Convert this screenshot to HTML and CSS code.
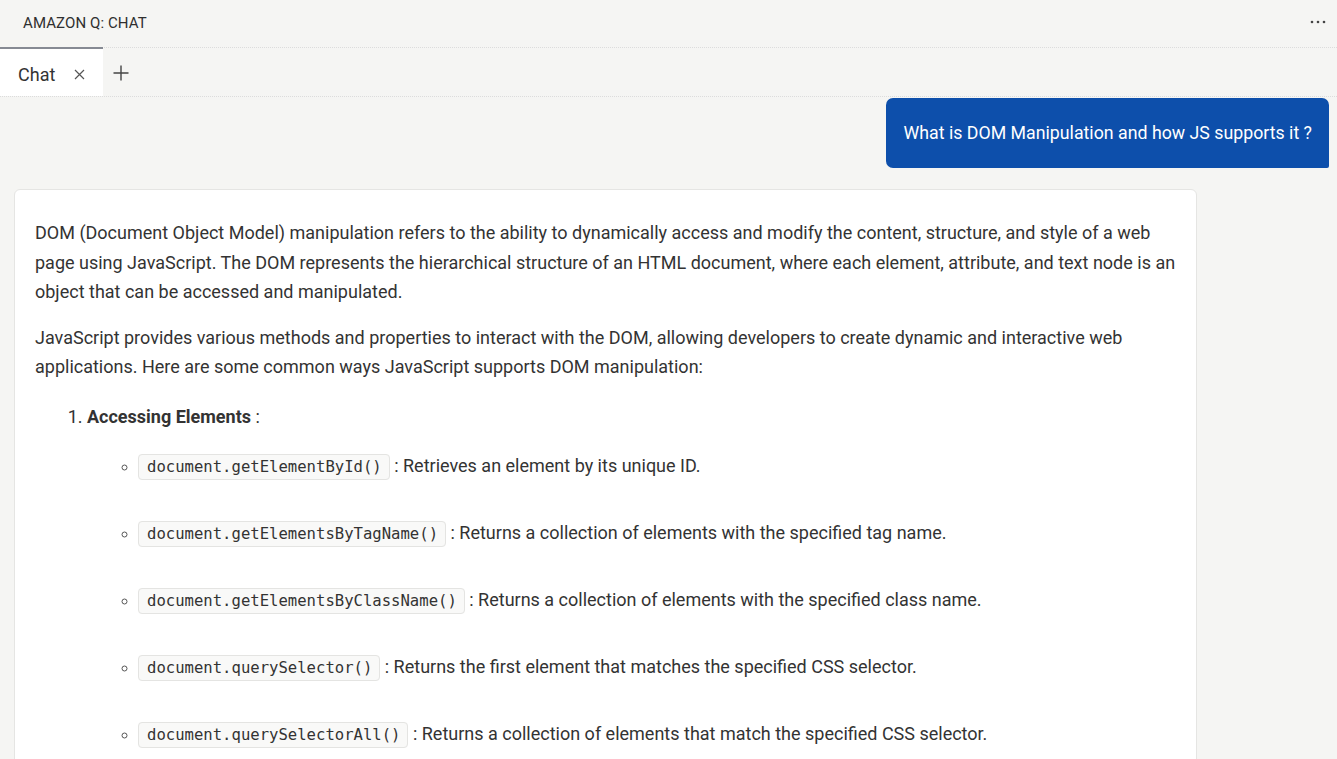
FILE: index.html
```html
<!DOCTYPE html>
<html>
<head>
<meta charset="utf-8">
<link rel="stylesheet" href="styles.css">
</head>
<body>
<div class="app">
  <header class="titlebar">
    <span class="title">AMAZON Q: CHAT</span>
    <svg class="more" width="16" height="4" viewBox="0 0 16 4"><circle cx="2" cy="2" r="1.3" fill="#444"/><circle cx="8" cy="2" r="1.3" fill="#444"/><circle cx="14" cy="2" r="1.3" fill="#444"/></svg>
  </header>
  <nav class="tabbar">
    <div class="tab active">
      <span class="tab-label">Chat</span>
      <svg class="tab-close" width="11" height="11" viewBox="0 0 11 11"><path d="M1 1L10 10M10 1L1 10" stroke="#555" stroke-width="1.2" fill="none"/></svg>
    </div>
    <div class="tab-add">
      <svg width="16" height="16" viewBox="0 0 16 16"><path d="M8 0.5V15.5M0.5 8H15.5" stroke="#444" stroke-width="1.4" fill="none"/></svg>
    </div>
  </nav>
  <main class="chat">
    <div class="row-user">
      <div class="bubble">What is DOM Manipulation and how JS supports it ?</div>
    </div>
    <div class="card">
      <p>DOM (Document Object Model) manipulation refers to the ability to dynamically access and modify the content, structure, and style of a web page using JavaScript. The DOM represents the hierarchical structure of an HTML document, where each element, attribute, and text node is an object that can be accessed and manipulated.</p>
      <p>JavaScript provides various methods and properties to interact with the DOM, allowing developers to create dynamic and interactive web applications. Here are some common ways JavaScript supports DOM manipulation:</p>
      <ol class="steps">
        <li><strong>Accessing Elements</strong> :
          <ul class="sub">
            <li><code>document.getElementById()</code> : Retrieves an element by its unique ID.</li>
            <li><code>document.getElementsByTagName()</code> : Returns a collection of elements with the specified tag name.</li>
            <li><code>document.getElementsByClassName()</code> : Returns a collection of elements with the specified class name.</li>
            <li><code>document.querySelector()</code> : Returns the first element that matches the specified CSS selector.</li>
            <li><code>document.querySelectorAll()</code> : Returns a collection of elements that match the specified CSS selector.</li>
          </ul>
        </li>
      </ol>
    </div>
  </main>
</div>
</body>
</html>
```
FILE: styles.css
```css
* { box-sizing: border-box; }
html, body {
  margin: 0;
  padding: 0;
  height: 100%;
  overflow: hidden;
}
body {
  background: #f5f5f3;
  font-family: Roboto, "Liberation Sans", Arial, sans-serif;
  color: #333;
}
.app {
  display: flex;
  flex-direction: column;
  height: 759px;
}
.titlebar {
  height: 48px;
  flex: none;
  display: flex;
  align-items: center;
  justify-content: space-between;
  padding: 0 11px 2px 23px;
  border-bottom: 1px dotted #dcdcdc;
}
.title {
  font-size: 15px;
  color: #2f2f2f;
  letter-spacing: 0.1px;
}
.more {
  margin-top: -2px;
}
.tabbar {
  height: 49px;
  flex: none;
  display: flex;
  align-items: stretch;
  border-bottom: 1px dotted #dcdcdc;
}
.tab {
  width: 103px;
  background: #ffffff;
  border-top: 2px solid #868a93;
  display: flex;
  align-items: center;
  padding: 3px 0 0 18px;
  margin-top: -1px;
}
.tab-label {
  font-size: 18px;
  color: #333;
}
.tab-close {
  margin-left: 19px;
}
.tab-add {
  display: flex;
  align-items: center;
  padding: 1px 0 0 10px;
}
.chat {
  flex: 1;
  padding: 1px 8px 0 14px;
  overflow: hidden;
}
.row-user {
  display: flex;
  justify-content: flex-end;
}
.bubble {
  background: #0d4fab;
  color: #ffffff;
  font-size: 17.75px;
  height: 70px;
  display: flex;
  align-items: center;
  padding: 0 17px 1px 18px;
  border-radius: 7px 7px 2px 7px;
}
.card {
  margin-top: 21px;
  width: 1183px;
  background: #ffffff;
  border: 1px solid #e5e5e3;
  border-radius: 6px;
  padding: 28px 20px 0 20px;
  font-size: 18px;
  line-height: 29.5px;
}
.card p {
  margin: 0 0 16px 0;
}
.steps {
  margin: 20px 0 0 0;
  padding-left: 52px;
}
.sub {
  list-style: circle;
  margin: 20px 0 0 0;
  padding-left: 51px;
}
.sub li {
  margin-bottom: 37.5px;
}
.sub li + li {
  margin-top: 0;
}
.sub li {
  margin-bottom: 35.5px;
}
.sub li::marker {
  font-size: 15px;
  color: #555;
}
code {
  font-family: "DejaVu Sans Mono", "Liberation Mono", monospace;
  font-size: 15.6px;
  background: #f9f9f8;
  border: 1px solid #e4e4e2;
  border-radius: 4px;
  padding: 3px 7px 3px 8px;
  color: #333;
}
```
